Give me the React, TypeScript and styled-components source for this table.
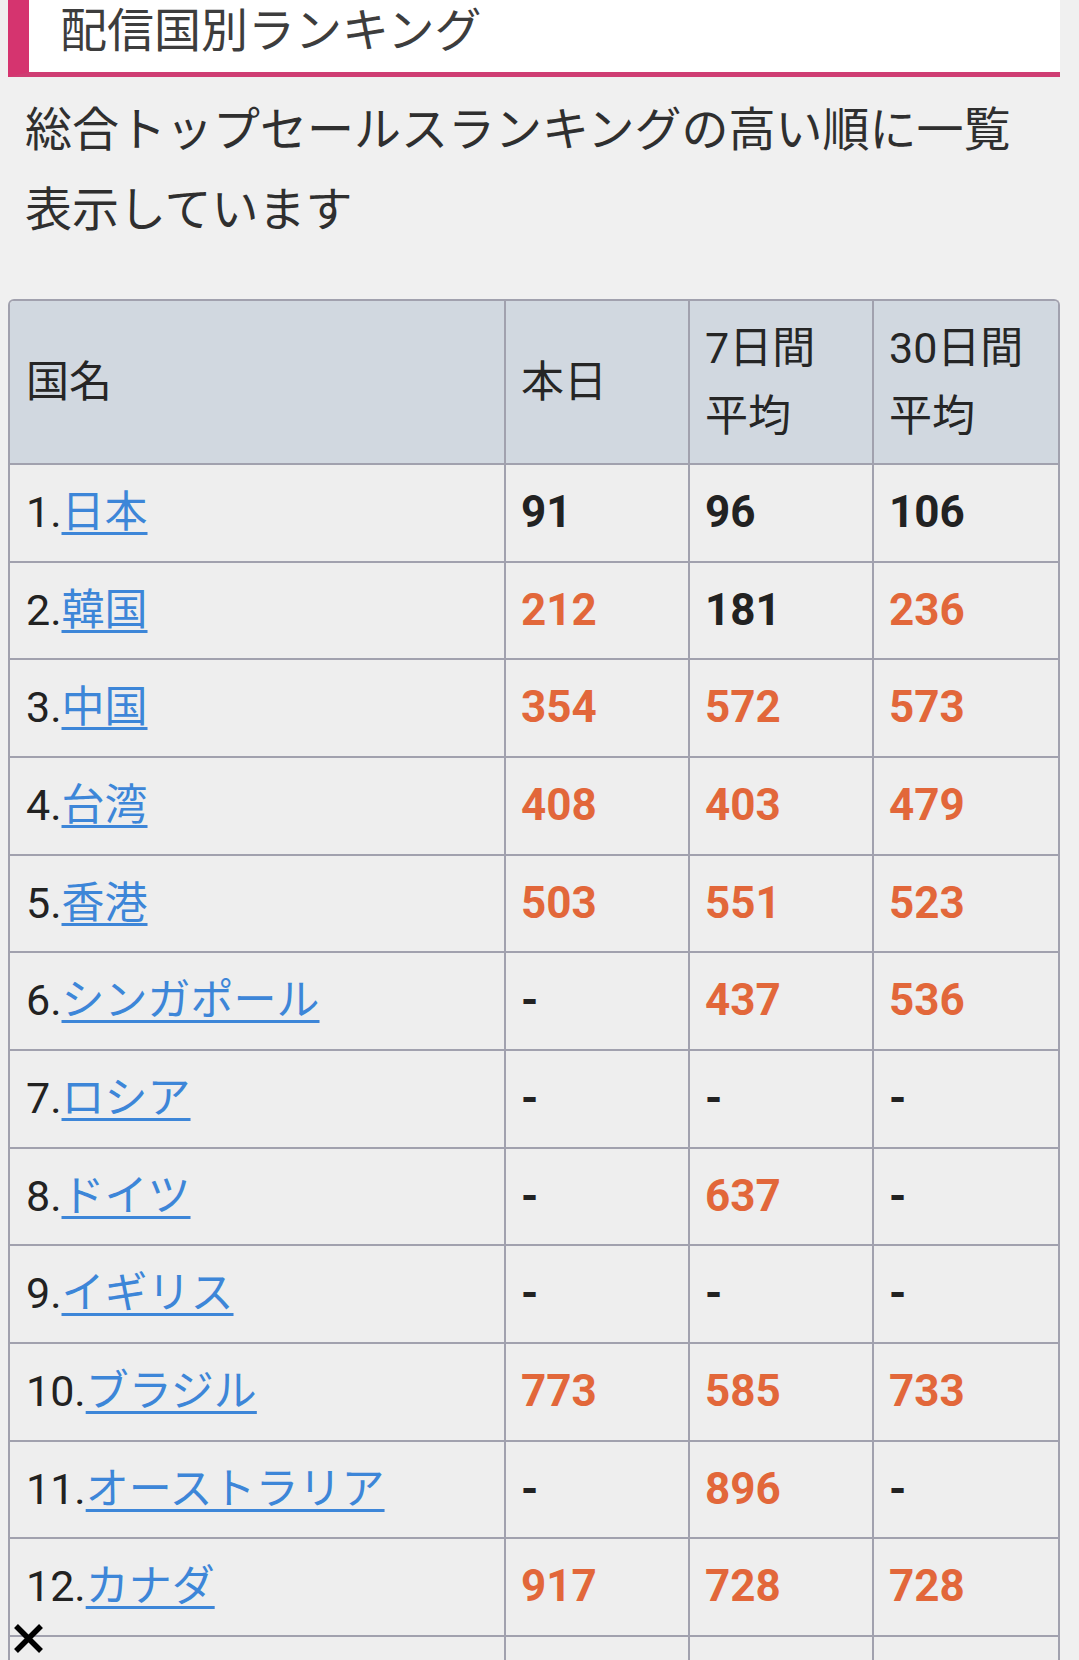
import styled, { createGlobalStyle } from "styled-components";

const GlobalStyle = createGlobalStyle`
  html, body {
    margin: 0;
    padding: 0;
    background: #f0f0f0;
  }
  body {
    font-family: Roboto, "Noto Sans CJK JP", sans-serif;
    color: #222;
  }
`;

const Page = styled.div`
  padding: 0 19px 0 8px;
`;

const SectionHeader = styled.h2`
  margin: 0;
  height: 72px;
  background: #fff;
  border-left: 21px solid #d5346f;
  border-bottom: 5px solid #cf3d73;
  padding-left: 31px;
  font-size: 47px;
  font-weight: 400;
  line-height: 62px;
  color: #3d3d3d;
`;

const Description = styled.p`
  margin: 13px 0 0;
  padding: 0 17px;
  font-size: 47px;
  line-height: 80px;
  color: #2f2f2f;
`;

const TableFrame = styled.div`
  margin-top: 49px;
  border: 2px solid #a1a1ae;
  border-bottom: none;
  border-radius: 6px 6px 0 0;
  overflow: hidden;
`;

const Table = styled.table`
  width: 100%;
  table-layout: fixed;
  border-collapse: separate;
  border-spacing: 0;
  font-size: 43px;
`;

const Col = styled.col<{ $w: number }>`
  width: ${(p) => p.$w}px;
`;

const HeadCell = styled.th`
  box-sizing: border-box;
  background: #d1d8e0;
  text-align: left;
  vertical-align: middle;
  font-weight: 400;
  color: #262626;
  line-height: 67.7px;
  padding: 14px 16px 12.7px 15px;
  border-right: 2px solid #a1a1ae;
  border-bottom: 2px solid #a1a1ae;

  &:first-child {
    padding-left: 16px;
  }
  &:last-child {
    border-right: none;
  }
`;

const Cell = styled.td<{ $tone?: "orange" | "dark" }>`
  box-sizing: border-box;
  height: 97.68px;
  background: #eeeeee;
  text-align: left;
  vertical-align: middle;
  line-height: 67.7px;
  padding: 14px 16px 13.97px 15px;
  white-space: nowrap;
  border-right: 2px solid #a1a1ae;
  border-bottom: 2px solid #a1a1ae;
  color: ${(p) => (p.$tone === "orange" ? "#e2673a" : "#222")};
  font-weight: ${(p) => (p.$tone ? 700 : 400)};
  font-size: ${(p) => (p.$tone ? "44px" : "43px")};

  &:first-child {
    padding-left: 16px;
  }
  &:last-child {
    border-right: none;
  }
`;

const CountryLink = styled.a`
  color: #3d86d8;
  text-decoration: underline;
  text-decoration-thickness: 3px;
  text-underline-offset: 5px;
`;

const CloseButton = styled.button`
  position: fixed;
  left: 13px;
  top: 1623px;
  width: 31px;
  height: 31px;
  padding: 0;
  border: none;
  background: transparent;
  display: flex;
  align-items: center;
  justify-content: center;
`;

type Row = {
  name: string;
  today: number | null;
  week: number | null;
  month: number | null;
};

const rows: Row[] = [
  { name: "日本", today: 91, week: 96, month: 106 },
  { name: "韓国", today: 212, week: 181, month: 236 },
  { name: "中国", today: 354, week: 572, month: 573 },
  { name: "台湾", today: 408, week: 403, month: 479 },
  { name: "香港", today: 503, week: 551, month: 523 },
  { name: "シンガポール", today: null, week: 437, month: 536 },
  { name: "ロシア", today: null, week: null, month: null },
  { name: "ドイツ", today: null, week: 637, month: null },
  { name: "イギリス", today: null, week: null, month: null },
  { name: "ブラジル", today: 773, week: 585, month: 733 },
  { name: "オーストラリア", today: null, week: 896, month: null },
  { name: "カナダ", today: 917, week: 728, month: 728 },
];

function RankCell({ value }: { value: number | null }) {
  if (value === null) return <Cell $tone="dark">-</Cell>;
  return <Cell $tone={value >= 200 ? "orange" : "dark"}>{value}</Cell>;
}

export default function App() {
  return (
    <Page>
      <GlobalStyle />
      <SectionHeader>配信国別ランキング</SectionHeader>
      <Description>総合トップセールスランキングの高い順に一覧表示しています</Description>
      <TableFrame>
        <Table>
          <colgroup>
            <Col $w={496} />
            <Col $w={184} />
            <Col $w={184} />
            <Col $w={184} />
          </colgroup>
          <thead>
            <tr>
              <HeadCell>国名</HeadCell>
              <HeadCell>本日</HeadCell>
              <HeadCell>7日間平均</HeadCell>
              <HeadCell>30日間平均</HeadCell>
            </tr>
          </thead>
          <tbody>
            {rows.map((r, i) => (
              <tr key={r.name}>
                <Cell>
                  {i + 1}.<CountryLink href="#">{r.name}</CountryLink>
                </Cell>
                <RankCell value={r.today} />
                <RankCell value={r.week} />
                <RankCell value={r.month} />
              </tr>
            ))}
            {/* next row continues below the fold */}
            <tr>
              <Cell />
              <Cell />
              <Cell />
              <Cell />
            </tr>
          </tbody>
        </Table>
      </TableFrame>
      <CloseButton aria-label="閉じる">
        <svg width="31" height="31" viewBox="0 0 31 31">
          <path d="M3 3 L28 28 M28 3 L3 28" stroke="#000" strokeWidth="5.5" fill="none" />
        </svg>
      </CloseButton>
    </Page>
  );
}
